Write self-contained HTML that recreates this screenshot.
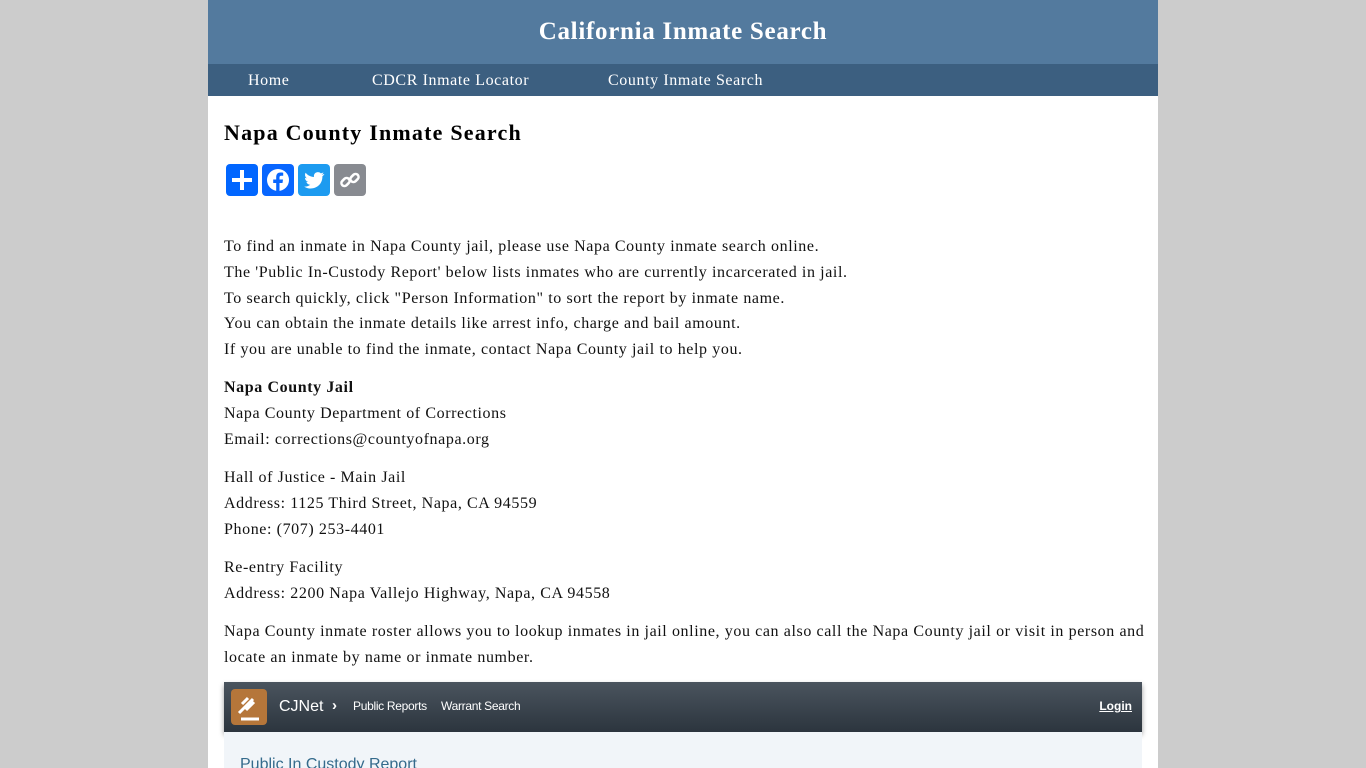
<!DOCTYPE html>
<html><head><meta charset="utf-8"><style>
body{margin:0;background:#cccccc;font-family:"Liberation Serif",serif;}
.wrap{position:absolute;left:208px;top:0;width:950px;height:768px;background:#fff;overflow:hidden}
.hdr{height:64px;background:#537a9e;color:#fff;text-align:center;font-weight:bold;font-size:25px;line-height:64px;letter-spacing:0.7px}
.nav{height:32px;background:#3c5f80;color:#fff;font-size:16px;line-height:32px;position:relative;letter-spacing:0.6px}
.nav span{position:absolute;top:1px}
h1{position:absolute;left:16px;top:120px;margin:0;font-size:22px;letter-spacing:1.2px}
.icons{position:absolute;left:18px;top:164px}
.icons div{position:absolute;top:0;width:32px;height:32px;border-radius:4px}
.txt{position:absolute;left:16px;top:234px;font-size:16px;line-height:25.75px;color:#111;width:925px;letter-spacing:0.6px}
p{margin:0 0 12.5px}
.cj{position:absolute;left:16px;top:682px;width:918px;height:50px;background:linear-gradient(#4a545e,#2c353e);box-shadow:0 3px 5px rgba(0,0,0,.4);font-family:"Liberation Sans",sans-serif;color:#fff}
.sub{position:absolute;left:16px;top:732px;width:918px;height:40px;background:#f1f5f9;font-family:"Liberation Sans",sans-serif;color:#356b8c;font-size:16px}
</style></head><body><div class="wrap">
<div class="hdr">California Inmate Search</div>
<div class="nav"><span style="left:40px">Home</span><span style="left:164px">CDCR Inmate Locator</span><span style="left:400px">County Inmate Search</span></div>
<h1>Napa County Inmate Search</h1>
<div class="icons">
<div style="left:0;background:#0166ff"><svg width="32" height="32"><path d="M16 6v20M6 16h20" stroke="#fff" stroke-width="4"/></svg></div>
<div style="left:36px;background:#0866ff"><svg width="32" height="32"><circle cx="16" cy="16" r="11" fill="#fff"/><path d="M17.5 28v-9h3l.5-3.5h-3.5v-2c0-1 .4-1.7 1.8-1.7h1.9V8.7c-.6-.1-1.6-.2-2.7-.2-2.7 0-4.3 1.6-4.3 4.5v2.5h-3V19h3v9z" fill="#0866ff"/></svg></div>
<div style="left:72px;background:#1d9bf0"><svg width="32" height="32"><path d="M26 10c-.8.4-1.6.6-2.4.7.9-.5 1.5-1.3 1.8-2.3-.8.5-1.7.8-2.6 1-1.6-1.7-4.4-1.6-6 .1-.8.9-1.1 2.3-.8 3.5-3.3-.2-6.3-1.7-8.4-4.3-1.1 1.9-.5 4.3 1.3 5.5-.7 0-1.3-.2-1.9-.5 0 2 1.4 3.7 3.3 4.1-.6.2-1.3.2-1.9.1.5 1.7 2.1 2.9 3.9 2.9-1.7 1.4-4 2-6.1 1.8 7.9 5 18.2-.2 18.2-9.8 0-.2 0-.4 0-.6.8-.6 1.5-1.3 2-2.2z" fill="#fff"/></svg></div>
<div style="left:108px;background:#888b91"><svg width="32" height="32"><g fill="none" stroke="#fff" stroke-width="2.5"><rect x="7" y="15" width="9" height="6" rx="3" transform="rotate(-45 11.5 18)"/><rect x="16" y="11" width="9" height="6" rx="3" transform="rotate(-45 20.5 14)"/></g></svg></div>
</div>
<div class="txt">
<p>To find an inmate in Napa County jail, please use Napa County inmate search online.<br>The 'Public In-Custody Report' below lists inmates who are currently incarcerated in jail.<br>To search quickly, click "Person Information" to sort the report by inmate name.<br>You can obtain the inmate details like arrest info, charge and bail amount.<br>If you are unable to find the inmate, contact Napa County jail to help you.</p>
<p><b>Napa County Jail</b><br>Napa County Department of Corrections<br>Email: corrections@countyofnapa.org</p>
<p>Hall of Justice - Main Jail<br>Address: 1125 Third Street, Napa, CA 94559<br>Phone: (707) 253-4401</p>
<p>Re-entry Facility<br>Address: 2200 Napa Vallejo Highway, Napa, CA 94558</p>
<p>Napa County inmate roster allows you to lookup inmates in jail online, you can also call the Napa County jail or visit in person and locate an inmate by name or inmate number.</p>
</div>
<div class="cj">
<div style="position:absolute;left:7px;top:7px;width:36px;height:36px;border-radius:4px;background:#b5763a"><svg width="36" height="36"><path d="M8 24l14-14M11 15l6-6M15 21l8-8M10 30h18" stroke="#fff" stroke-width="3"/></svg></div>
<span style="position:absolute;left:55px;top:16px;font-size:16px">CJNet</span>
<span style="position:absolute;left:108px;top:15px;font-size:15px;font-weight:bold">›</span>
<span style="position:absolute;left:129px;top:17px;font-size:12px;letter-spacing:-0.3px">Public Reports</span>
<span style="position:absolute;left:217px;top:17px;font-size:12px;letter-spacing:-0.3px">Warrant Search</span>
<span style="position:absolute;right:10px;top:17px;font-size:12px;font-weight:bold;text-decoration:underline">Login</span>
</div>
<div class="sub"><span style="position:absolute;left:16px;top:24px">Public In Custody Report</span></div>
</div></body></html>
